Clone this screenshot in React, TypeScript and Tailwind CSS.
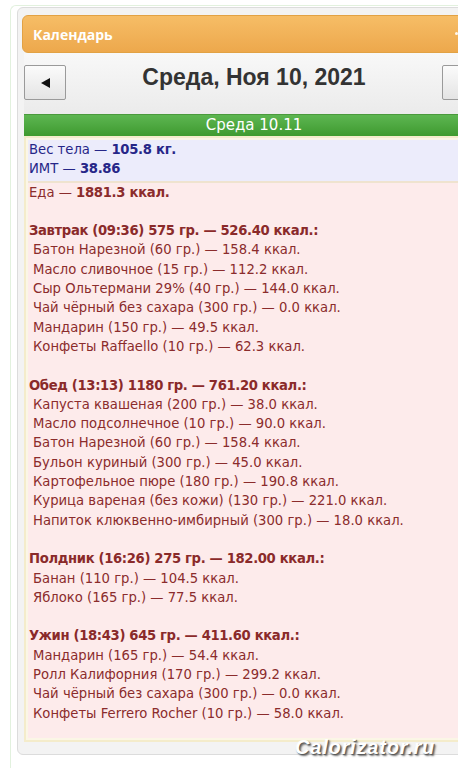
import React from "react";

type Meal = { title: string; items: string[] };

const meals: Meal[] = [
  {
    title: "Завтрак (09:36) 575 гр. — 526.40 ккал.:",
    items: [
      "Батон Нарезной (60 гр.) — 158.4 ккал.",
      "Масло сливочное (15 гр.) — 112.2 ккал.",
      "Сыр Ольтермани 29% (40 гр.) — 144.0 ккал.",
      "Чай чёрный без сахара (300 гр.) — 0.0 ккал.",
      "Мандарин (150 гр.) — 49.5 ккал.",
      "Конфеты Raffaello (10 гр.) — 62.3 ккал.",
    ],
  },
  {
    title: "Обед (13:13) 1180 гр. — 761.20 ккал.:",
    items: [
      "Капуста квашеная (200 гр.) — 38.0 ккал.",
      "Масло подсолнечное (10 гр.) — 90.0 ккал.",
      "Батон Нарезной (60 гр.) — 158.4 ккал.",
      "Бульон куриный (300 гр.) — 45.0 ккал.",
      "Картофельное пюре (180 гр.) — 190.8 ккал.",
      "Курица вареная (без кожи) (130 гр.) — 221.0 ккал.",
      "Напиток клюквенно-имбирный (300 гр.) — 18.0 ккал.",
    ],
  },
  {
    title: "Полдник (16:26) 275 гр. — 182.00 ккал.:",
    items: ["Банан (110 гр.) — 104.5 ккал.", "Яблоко (165 гр.) — 77.5 ккал."],
  },
  {
    title: "Ужин (18:43) 645 гр. — 411.60 ккал.:",
    items: [
      "Мандарин (165 гр.) — 54.4 ккал.",
      "Ролл Калифорния (170 гр.) — 299.2 ккал.",
      "Чай чёрный без сахара (300 гр.) — 0.0 ккал.",
      "Конфеты Ferrero Rocher (10 гр.) — 58.0 ккал.",
    ],
  },
];

export default function App() {
  return (
    <div className="w-[458px] h-[768px] overflow-hidden bg-white relative">
      <div className="ml-[10px] mt-[5px] h-[763px] border-l border-t border-[#e2f1de] rounded-tl-md pl-[6px]">
        <div className="w-[474px] mt-[1px] border border-[#dcdcdc] rounded-md bg-[#f3f3f3] px-[4px] pt-[7px] pb-[12px]">
          {/* Orange header */}
          <div className="relative h-[38px] rounded-md border border-[#e2a244] bg-gradient-to-b from-[#f6bd66] to-[#eda84c] flex items-center pl-[10px]">
            <span className="text-white font-bold text-[14px] [font-family:'Open_Sans',sans-serif]">
              Календарь
            </span>
            <span className="absolute left-[432px] top-[16px] w-[3px] h-[3px] rounded-full bg-white/90" />
          </div>
          <div className="px-[2px]">
            {/* Navigation */}
            <div className="h-[61px] bg-gradient-to-b from-[#f8f8f8] to-[#ebebeb] flex items-center justify-between pb-[2px]">
              <div className="w-[42px] h-[35px] border border-[#9a9a9a] rounded-[2px] bg-gradient-to-b from-[#fbfbfb] to-[#e4e4e4] flex items-center justify-center">
                <svg width="11" height="12" viewBox="0 0 11 12">
                  <polygon points="1,6 10,1 10,11" fill="#111" />
                </svg>
              </div>
              <div className="text-[23px] font-bold text-[#333] [font-family:'Liberation_Sans',Arial,sans-serif] mt-[-11px]">
                Среда, Ноя 10, 2021
              </div>
              <div className="w-[42px] h-[35px] border border-[#9a9a9a] rounded-[2px] bg-gradient-to-b from-[#fbfbfb] to-[#e4e4e4] flex items-center justify-center">
                <svg width="11" height="12" viewBox="0 0 11 12">
                  <polygon points="10,6 1,1 1,11" fill="#111" />
                </svg>
              </div>
            </div>
            {/* Green day bar */}
            <div className="h-[22px] bg-gradient-to-b from-[#5db651] to-[#3e9a2f] border-t border-[#4a9a3c] flex items-center justify-center text-white text-[15px] [font-family:'DejaVu_Sans',Verdana,sans-serif]">
              Среда 10.11
            </div>
            {/* Cream box */}
            <div className="border-2 border-[#f4eccb] bg-[#fbf6e6] p-[2px] [font-family:'DejaVu_Sans',Verdana,sans-serif] text-[13.2px] leading-[19.3px]">
              <div className="bg-[#ececfb] text-[#262688] pl-[1px] pb-[2px]">
                <div>
                  Вес тела — <b className="tracking-[-0.3px]">105.8 кг.</b>
                </div>
                <div>
                  ИМТ — <b className="tracking-[-0.3px]">38.86</b>
                </div>
              </div>
              <div className="h-[2px] bg-[#efe3cf]" />
              <div className="bg-[#fdebeb] text-[#8b2c2c] pl-[1px] pb-[15px]">
                <div>
                  Еда — <b className="tracking-[-0.3px]">1881.3 ккал.</b>
                </div>
                {meals.map((m) => (
                  <div key={m.title}>
                    <div className="h-[19.3px]" />
                    <div className="font-bold text-[#8a2a2a] tracking-[-0.35px]">{m.title}</div>
                    {m.items.map((it) => (
                      <div key={it} className="pl-[4px]">
                        {it}
                      </div>
                    ))}
                  </div>
                ))}
              </div>
            </div>
          </div>
        </div>
      </div>
      <div className="absolute left-[295px] top-[732px] text-[20px] font-bold italic text-white [font-family:'Liberation_Sans',Arial,sans-serif] [text-shadow:1px_1px_1px_#555,2px_2px_2px_#777] tracking-[0.8px]">
        Calorizator.ru
      </div>
    </div>
  );
}
